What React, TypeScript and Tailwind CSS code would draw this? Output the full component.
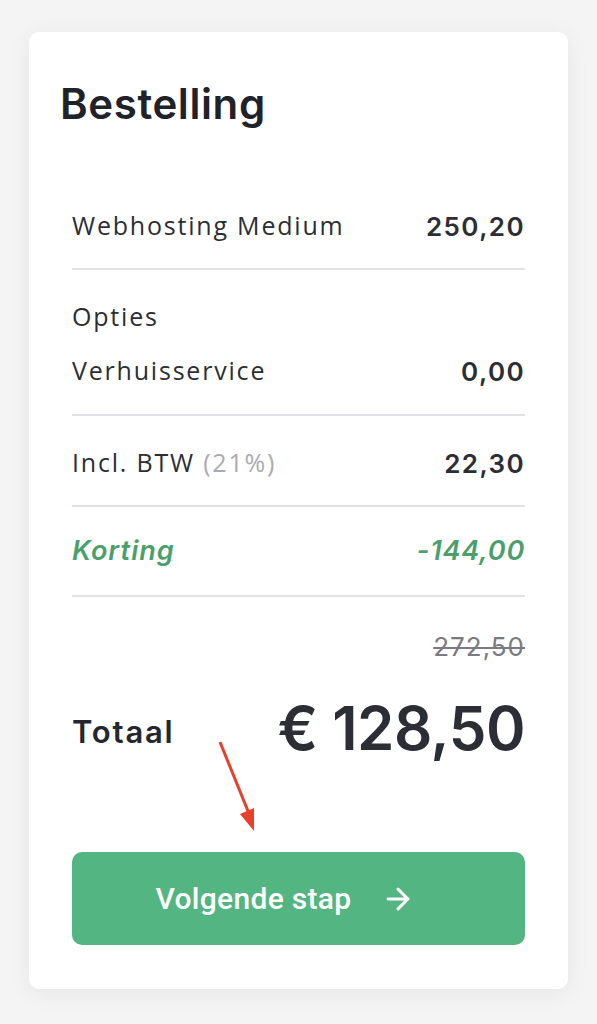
// Order summary card — "Bestelling" with line items, total and next-step button
import { ArrowRight } from 'lucide-react';

const BODY = { fontFamily: '"Open Sans", "Noto Sans", sans-serif' };
const HEAD = { fontFamily: 'Inter, "Noto Sans", sans-serif' };

function Row({ label, value, className = '' }: { label: React.ReactNode; value: string; className?: string }) {
  return (
    <div className={`flex items-center justify-between ${className}`}>
      <span className="text-[25px] tracking-[1.8px] text-[#2b2e35]" style={BODY}>{label}</span>
      <span className="text-[26px] font-semibold tracking-[1.4px] text-[#2b2e35]" style={HEAD}>{value}</span>
    </div>
  );
}

export default function App() {
  return (
    <div className="min-h-[1024px] bg-[#f4f4f5] pt-[32px] px-[29px] pb-[36px]">
      <div className="relative rounded-[10px] bg-white shadow-[0_4px_24px_rgba(0,0,0,0.06)] px-[31px] pt-[46px] pb-[44px]">
        <h1 className="text-[42px] font-semibold leading-[52px] text-[#1f2228] tracking-[0.6px]" style={HEAD}>
          Bestelling
        </h1>

        <div className="mx-[12px] mt-[54px]">
          <Row label="Webhosting Medium" value="250,20" className="h-[86px] border-b-2 border-[#e1e2e7]" />

          <div className="pt-[20px] pb-[16px] border-b-2 border-[#e1e2e7]">
            <div className="h-[54px] flex items-center text-[25px] tracking-[1.8px] text-[#2b2e35]" style={BODY}>Opties</div>
            <Row label="Verhuisservice" value="0,00" className="h-[54px]" />
          </div>

          <Row
            label={<>Incl. BTW <span className="text-[#a9abb4]">(21%)</span></>}
            value="22,30"
            className="h-[91px] pt-[5px] border-b-2 border-[#e1e2e7]"
          />

          <div className="h-[90px] flex items-center justify-between border-b-2 border-[#e1e2e7]">
            <span className="text-[27px] font-semibold italic tracking-[1px] text-[#4b9f6c]" style={HEAD}>Korting</span>
            <span className="text-[27px] font-semibold italic tracking-[0.8px] text-[#4b9f6c]" style={HEAD}>-144,00</span>
          </div>

          <div className="flex justify-end pt-[33px]">
            <span className="text-[26px] leading-[34px] tracking-[1px] text-[#7a7b80] line-through decoration-[2px]" style={HEAD}>272,50</span>
          </div>

          <div className="flex items-center justify-between mt-[30px]">
            <span className="text-[31px] font-semibold text-[#24272e] tracking-[1.8px] pt-[8px]" style={HEAD}>Totaal</span>
            <span className="text-[60px] font-semibold leading-[68px] text-[#2b2e35] tracking-[-0.5px]" style={HEAD}>€ 128,50</span>
          </div>

          <button
            className="mt-[90px] w-full h-[93px] rounded-[10px] bg-[#53b582] flex items-center justify-center gap-[30px] pr-[26px] text-white"
            style={{ fontFamily: 'Roboto, sans-serif' }}
          >
            <span className="text-[30px] font-medium tracking-[0.3px]">Volgende stap</span>
            <ArrowRight size={34} strokeWidth={2.1} />
          </button>
        </div>

        <svg className="absolute left-[151px] top-[668px]" width="90" height="140" viewBox="0 0 90 140">
          <line x1="40" y1="42" x2="70" y2="116" stroke="#e8412b" strokeWidth="3" />
          <polygon points="74,131 60,114 74,108" fill="#e8412b" />
        </svg>
      </div>
    </div>
  );
}
